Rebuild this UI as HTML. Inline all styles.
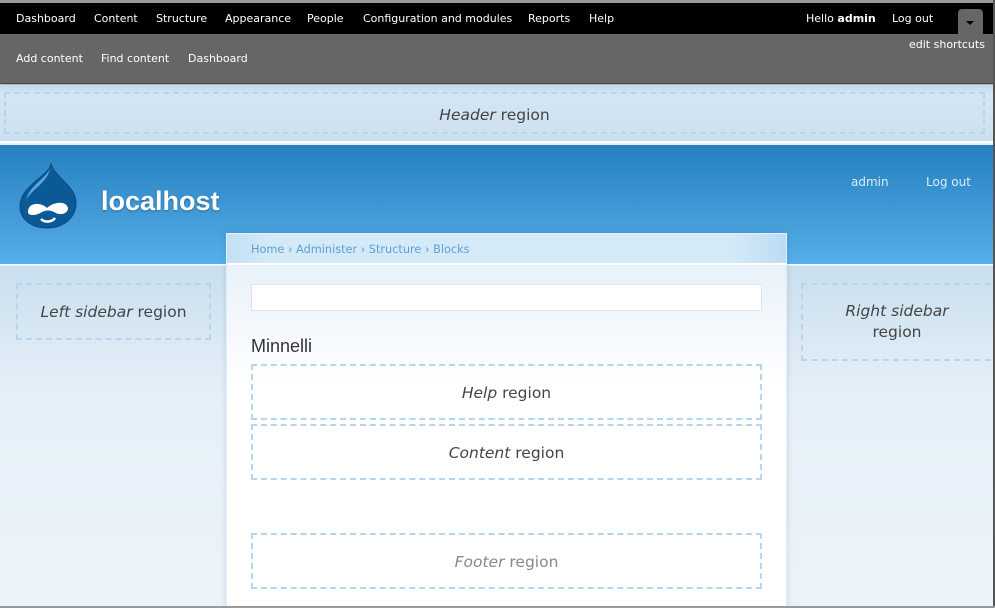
<!DOCTYPE html>
<html><head><meta charset="utf-8">
<style>
*{margin:0;padding:0;box-sizing:border-box}
html,body{width:995px;height:608px;overflow:hidden}
body{position:relative;font-family:"DejaVu Sans","Liberation Sans",sans-serif;background:#e6f0f8}
.abs{position:absolute}
#topstrip{left:0;top:0;width:995px;height:3px;background:#9a9a9a}
#tb{left:0;top:3px;width:995px;height:31px;background:#000;color:#fff;font-size:11px}
#tb span{position:absolute;top:9px}
#sc{left:0;top:34px;width:995px;height:50px;background:#666;color:#fff;font-size:11px;border-bottom:1px solid #4a4a4a;box-shadow:0 2px 3px rgba(0,0,0,.3)}
#sc span{position:absolute;top:18px}
#hdr{left:0;top:85px;width:995px;height:58px;background:linear-gradient(#c4d9ea,#d4e6f4 10px,#cde0ef);border-bottom:2px solid #fff}
.reg{position:absolute;border:2px dashed #b5d6ee;color:#444;font-size:15.5px;text-align:center;display:flex;align-items:center;justify-content:center}
#blue{left:0;top:145px;width:995px;height:120px;background:linear-gradient(#2680c0,#4aa2dd 75%,#56b0e8);border-bottom:1px solid #fff}
#body{left:0;top:266px;width:995px;height:342px;background:linear-gradient(#c9dfee,#e6f0f8 130px,#ebf3fa)}
#main{left:226px;top:233px;width:561px;height:375px;background:#fff;border:1px solid #e8eef5;border-bottom:none;box-shadow:0 0 6px rgba(0,60,120,.15)}
#crumb{left:0;top:0;width:559px;height:30px;background:linear-gradient(90deg,#c2dff5,#d4eaf8 8%,#d4eaf8 90%,#bcdcf3);border-bottom:1px solid #fff;color:#5a9fd6;font-size:11.3px;padding:9px 0 0 24px}
#inner{left:0;top:31px;width:559px;height:120px;background:linear-gradient(#e8f1f9,#fff)}
</style></head><body>
<div id="topstrip" class="abs"></div>
<div id="tb" class="abs">
<span style="left:16px">Dashboard</span><span style="left:94px">Content</span><span style="left:156px">Structure</span><span style="left:225px">Appearance</span><span style="left:307px">People</span><span style="left:363px">Configuration and modules</span><span style="left:528px">Reports</span><span style="left:589px">Help</span>
<span style="left:806px">Hello <b>admin</b></span><span style="left:892px">Log out</span>
<div style="position:absolute;left:958px;top:6px;width:25px;height:28px;background:#666;border-radius:4px 4px 0 0"></div>
<div style="position:absolute;left:966px;top:18px;width:0;height:0;border-left:4px solid transparent;border-right:4px solid transparent;border-top:4px solid #000"></div>
</div>
<div id="sc" class="abs">
<span style="left:16px">Add content</span><span style="left:101px">Find content</span><span style="left:188px">Dashboard</span>
<span style="left:909px;top:4px">edit shortcuts</span>
</div>
<div id="hdr" class="abs"><div class="reg" style="left:4px;top:7px;width:981px;height:42px;padding-top:3px"><span><i>Header</i> region</span></div></div>
<div id="blue" class="abs">
<svg style="position:absolute;left:17px;top:17px" width="62" height="68" viewBox="0 0 62 68">
<path d="M34 2 C32 14 3 24 3 44 C3 58 15 66 30 66 C46 66 59 56 59 41 C59 24 40 18 34 2Z" fill="#0b5a96" stroke="#084a7d" stroke-width="1"/>
<path d="M33 6 C30 16 12 24 9 38 C16 26 31 20 33 6Z" fill="#5fa8de"/>
<path d="M11 50 C11 40 24 40 30 46 C36 40 49 38 51 46 C51 52 43 54 37 50 C33 48 29 48 25 50 C19 54 11 54 11 50Z" fill="#fff"/>
<path d="M24 57 C28 61 35 60 38 56" stroke="#fff" stroke-width="2.5" fill="none"/>
</svg>
<div style="position:absolute;left:101px;top:41px;color:#fff;font:bold 27px 'Liberation Sans',sans-serif;text-shadow:0 1px 2px rgba(0,0,0,.3)">localhost</div>
<span style="position:absolute;left:851px;top:30px;color:#d8ecfa;font-size:12px">admin</span>
<span style="position:absolute;left:926px;top:30px;color:#d8ecfa;font-size:12px">Log out</span>
</div>
<div id="body" class="abs">
<div class="reg" style="left:16px;top:17px;width:195px;height:57px"><span><i>Left sidebar</i> region</span></div>
<div class="reg" style="left:801px;top:17px;width:200px;height:78px;line-height:21px;padding-right:8px"><span><i>Right sidebar</i><br>region</span></div>
</div>
<div id="main" class="abs">
<div id="crumb" class="abs">Home › Administer › Structure › Blocks</div>
<div id="inner" class="abs"></div>
<div class="abs" style="left:24px;top:50px;width:511px;height:27px;background:#fff;border:1px solid #dde3f5"></div>
<div class="abs" style="left:24px;top:102px;font:18px 'Liberation Sans',sans-serif;color:#333">Minnelli</div>
<div class="reg" style="left:24px;top:130px;width:511px;height:56px;padding-top:2px"><span><i>Help</i> region</span></div>
<div class="reg" style="left:24px;top:190px;width:511px;height:56px;padding-top:2px"><span><i>Content</i> region</span></div>
<div class="reg" style="left:24px;top:299px;width:511px;height:56px;color:#888;padding-top:2px"><span><i>Footer</i> region</span></div>
</div>
<div class="abs" style="left:993px;top:0;width:2px;height:608px;background:#555"></div>
<div class="abs" style="left:0;top:606px;width:995px;height:2px;background:#999"></div>
</body></html>
